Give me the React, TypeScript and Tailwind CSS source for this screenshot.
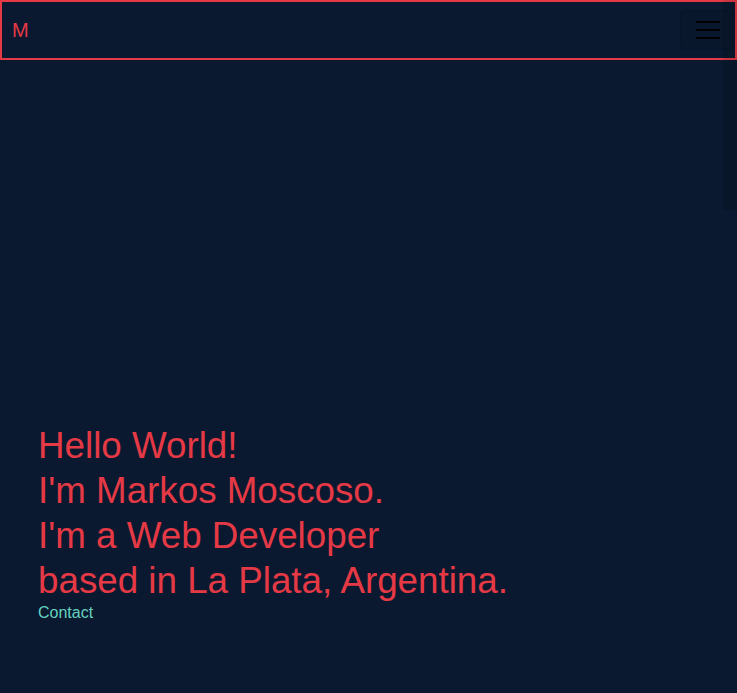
export default function App() {
    return (
        <div className="relative flex h-[693px] w-full flex-col overflow-hidden bg-[#0a192f] font-['Liberation_Sans',Arial,sans-serif]">
            <header className="flex h-[60px] items-center justify-between border-2 border-[#e63946] pl-[10px] pr-[1px]">
                <span className="text-[20px] text-[#e63946]">M</span>
                <button className="flex h-10 w-[54px] flex-col items-center justify-center gap-[6px] rounded-md border border-black/10 bg-[#09172c] pl-[2px]">
                    <span className="h-[2px] w-6 bg-black" />
                    <span className="h-[2px] w-6 bg-black" />
                    <span className="h-[2px] w-6 bg-black" />
                </button>
            </header>
            <div className="absolute right-0 top-0 h-[210px] w-[14px] bg-black/10" />
            <main className="flex flex-1 flex-col justify-end px-[38px] pb-[70px]">
                <h1 className="text-[36.75px] leading-[45px] text-[#e63946]">
                    Hello World!
                    <br />
                    I'm Markos Moscoso.
                    <br />
                    I'm a Web Developer
                    <br />
                    based in La Plata, Argentina.
                </h1>
                <a href="#contact" className="text-base leading-5 text-[#64d2c0]">
                    Contact
                </a>
            </main>
        </div>
    );
}
